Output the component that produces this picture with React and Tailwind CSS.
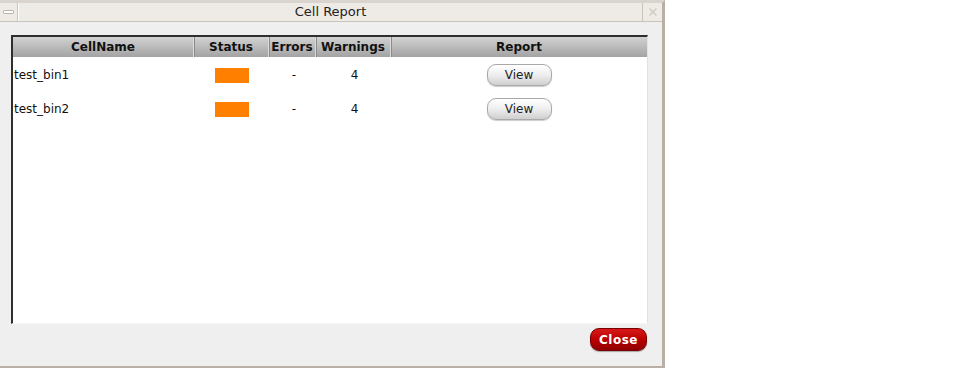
import { X } from "lucide-react";

const rows = [
  { name: "test_bin1", errors: "-", warnings: "4" },
  { name: "test_bin2", errors: "-", warnings: "4" },
];

const cols = [
  { label: "CellName", w: "w-[181px]" },
  { label: "Status", w: "w-[75px]" },
  { label: "Errors", w: "w-[47px]" },
  { label: "Warnings", w: "w-[75px]" },
  { label: "Report", w: "flex-1" },
];

export default function App() {
  return (
    <div className="w-[963px] h-[369px] bg-white font-['DejaVu_Sans',sans-serif] text-black">
      <div className="w-[665px] h-[368px] flex flex-col bg-[#efefef] border-r-[3px] border-b-[2px] border-[#b8b0a4] border-t-[3px] border-t-[#d9d5ce]">
        {/* Title bar */}
        <div className="h-[19px] flex bg-[#eeebe6] border-b border-[#c9c4bb]">
          <div className="w-[18px] flex items-center justify-center border-r border-[#c9c4bb]">
            <div className="w-[11px] h-[4px] rounded-[1px] bg-white border border-[#b9b4ac]" />
          </div>
          <div className="flex-1 flex items-center justify-center text-[13px] text-[#222] border-l border-white">
            Cell Report
          </div>
          <div className="w-[20px] flex items-center justify-center border-l border-[#c9c4bb] text-[#cfcac2]">
            <X size={12} strokeWidth={3} />
          </div>
        </div>

        {/* Body */}
        <div className="flex-1 flex flex-col pl-[11px] pr-[14px] pt-[13px]">
          <div className="h-[289px] flex flex-col bg-white border-l-2 border-t-2 border-[#2e2e2e] border-r border-r-[#e2e2e2] border-b border-b-[#f6f6f6]">
            <div className="h-[20px] flex bg-gradient-to-b from-[#d2d2d2] to-[#a3a3a3] text-[12px] font-bold text-[#111]">
              {cols.map((c, i) => (
                <div
                  key={c.label}
                  className={`${c.w} flex items-center justify-center ${i < cols.length - 1 ? "border-r border-r-[#dcdcdc] shadow-[1px_0_0_#8a8a8a]" : ""}`}
                >
                  {c.label}
                </div>
              ))}
            </div>
            <div className="pt-[1px]">
              {rows.map((r) => (
                <div key={r.name} className="h-[34px] flex items-center text-[12px] text-[#111]">
                  <div className="w-[181px] pl-[1px]">{r.name}</div>
                  <div className="w-[75px] flex justify-center">
                    <div className="w-[34px] h-[15px] bg-[#ff7f00] ml-[1px]" />
                  </div>
                  <div className="w-[47px] text-center pl-[3px]">{r.errors}</div>
                  <div className="w-[75px] text-center pl-[2px]">{r.warnings}</div>
                  <div className="flex-1 flex justify-center">
                    <button className="w-[65px] h-[22px] rounded-[9px] border border-[#a9a9a9] bg-gradient-to-b from-[#ffffff] via-[#eeeeee] to-[#cfcfcf] text-[12px] text-[#222] shadow-[0_1px_1px_rgba(0,0,0,0.2)]">
                      View
                    </button>
                  </div>
                </div>
              ))}
            </div>
          </div>
          <div className="flex justify-end mt-[4px]">
            <button className="w-[57px] h-[23px] mr-[1px] rounded-[9px] bg-gradient-to-b from-[#d81818] via-[#bb0000] to-[#900000] border border-[#7a0000] text-white text-[12px] font-bold tracking-[0.5px] shadow-[0_1px_1px_rgba(0,0,0,0.3)]">
              Close
            </button>
          </div>
        </div>
      </div>
    </div>
  );
}
